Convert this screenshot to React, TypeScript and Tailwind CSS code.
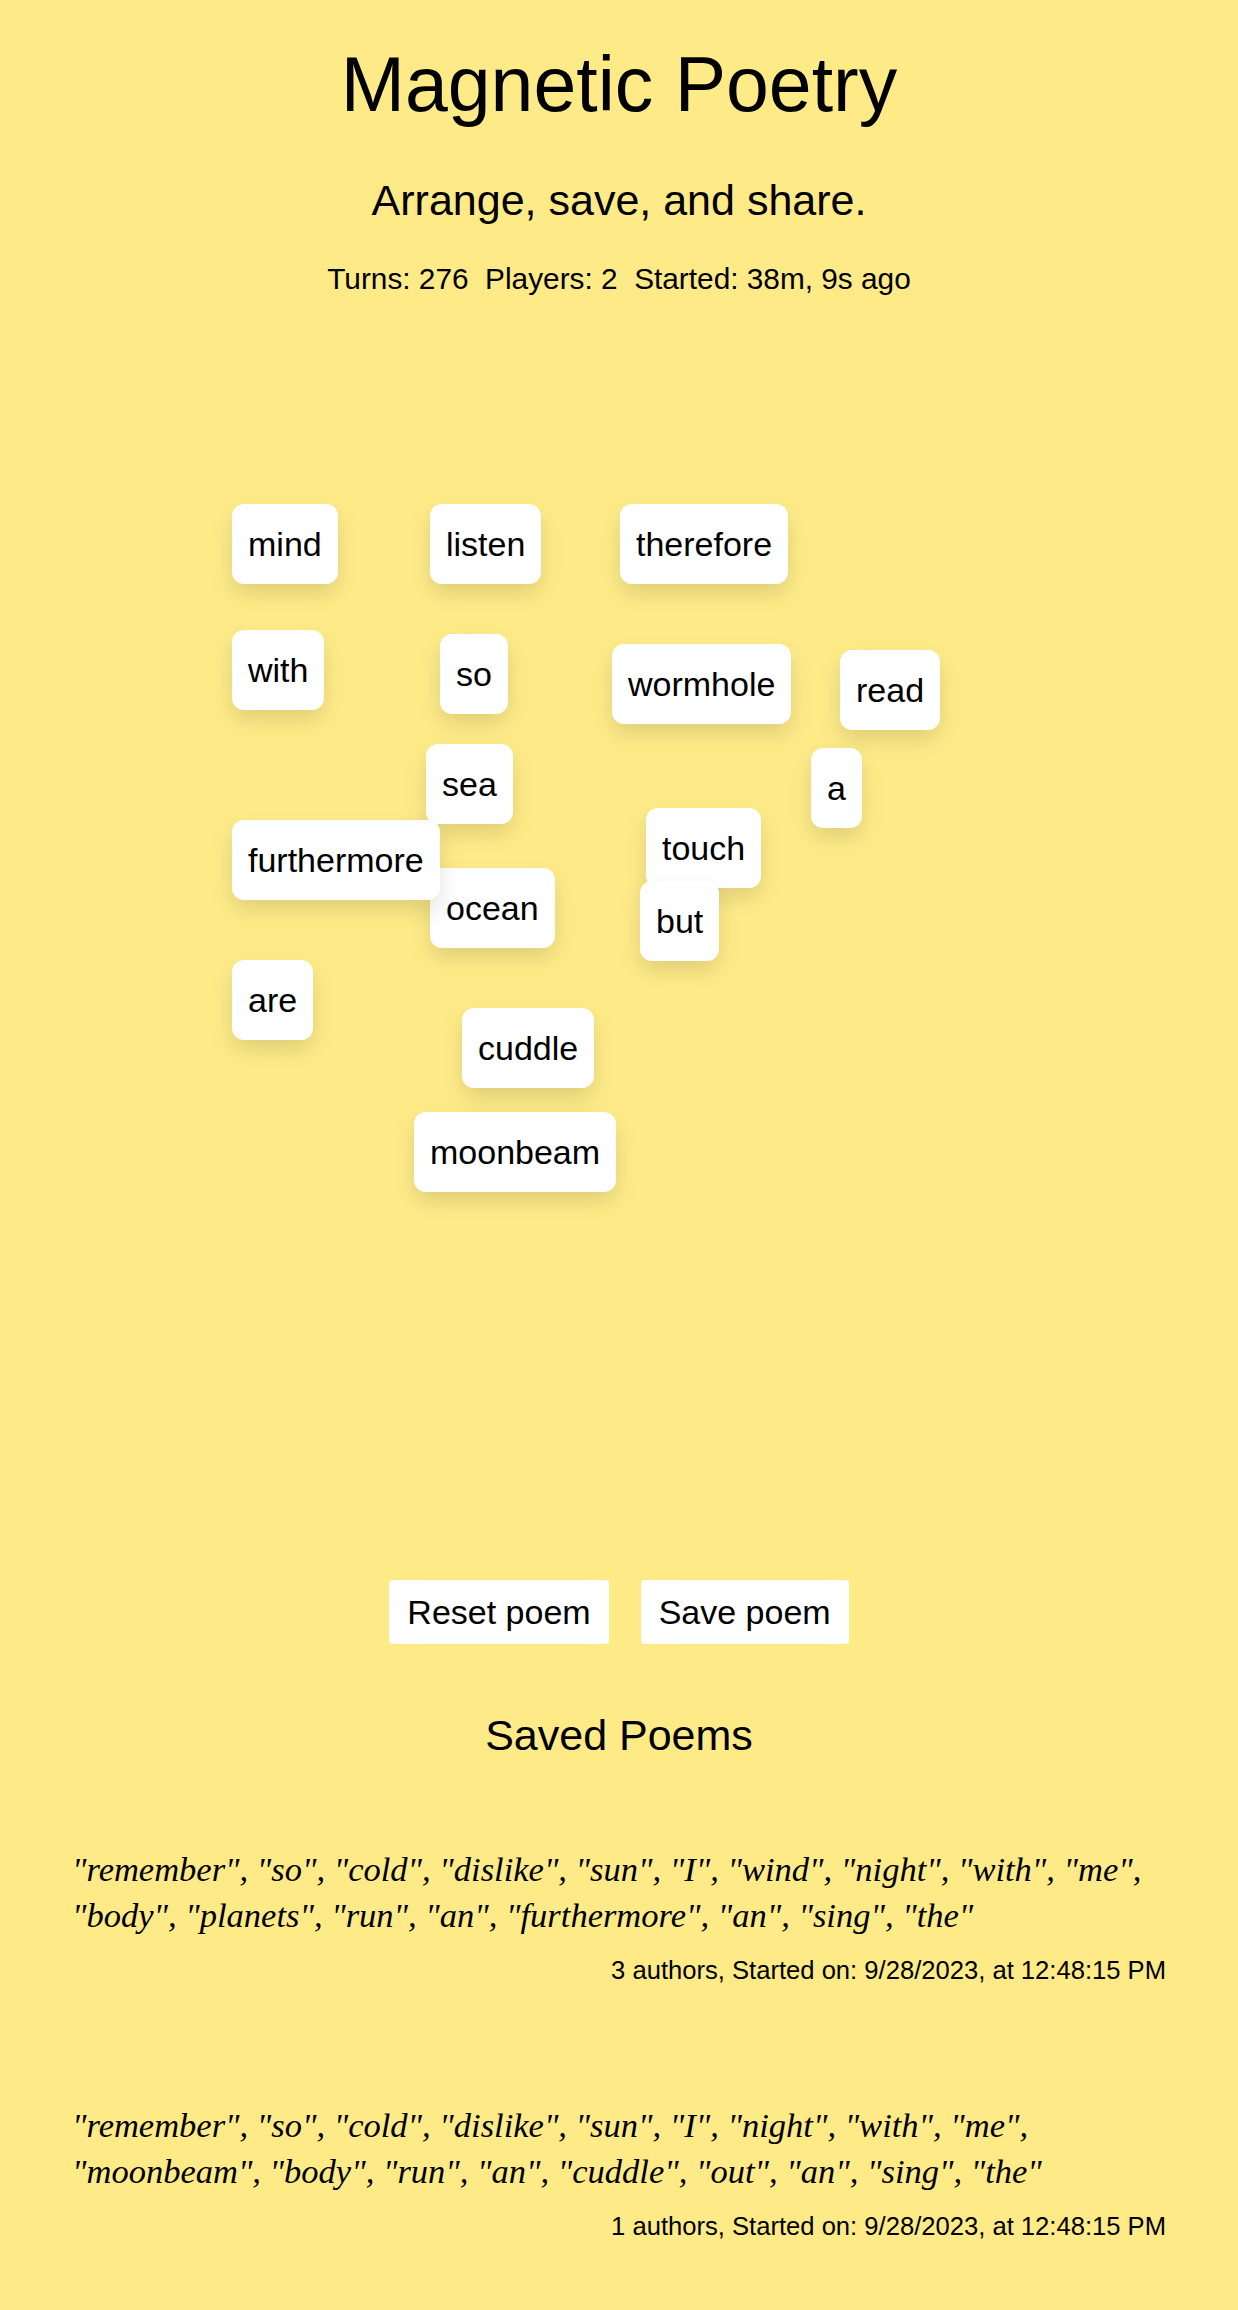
type Tile = { word: string; x: number; y: number }

// board origin is page (229, 296)
const tiles: Tile[] = [
  { word: 'mind', x: 232, y: 504 },
  { word: 'listen', x: 430, y: 504 },
  { word: 'therefore', x: 620, y: 504 },
  { word: 'with', x: 232, y: 630 },
  { word: 'so', x: 440, y: 634 },
  { word: 'wormhole', x: 612, y: 644 },
  { word: 'read', x: 840, y: 650 },
  { word: 'sea', x: 426, y: 744 },
  { word: 'a', x: 811, y: 748 },
  { word: 'ocean', x: 430, y: 868 },
  { word: 'furthermore', x: 232, y: 820 },
  { word: 'touch', x: 646, y: 808 },
  { word: 'but', x: 640, y: 881 },
  { word: 'are', x: 232, y: 960 },
  { word: 'cuddle', x: 462, y: 1008 },
  { word: 'moonbeam', x: 414, y: 1112 },
]

const poems = [
  {
    words: ['remember', 'so', 'cold', 'dislike', 'sun', 'I', 'wind', 'night', 'with', 'me', 'body', 'planets', 'run', 'an', 'furthermore', 'an', 'sing', 'the'],
    meta: '3 authors, Started on: 9/28/2023, at 12:48:15 PM',
  },
  {
    words: ['remember', 'so', 'cold', 'dislike', 'sun', 'I', 'night', 'with', 'me', 'moonbeam', 'body', 'run', 'an', 'cuddle', 'out', 'an', 'sing', 'the'],
    meta: '1 authors, Started on: 9/28/2023, at 12:48:15 PM',
  },
]

export default function App() {
  return (
    <div className="min-h-screen w-full bg-[#feeb88] text-black font-['Liberation_Sans',Arial,sans-serif]">
      <header className="flex flex-col items-center pt-[40px]">
        <h1 className="text-[77px] leading-[88px]">Magnetic Poetry</h1>
        <h2 className="mt-[47px] text-[43px] leading-[50px]">Arrange, save, and share.</h2>
        <p className="mt-[37px] text-[29.8px] leading-[34px] whitespace-pre">
          {'Turns: 276\u00a0 Players: 2\u00a0 Started: 38m, 9s ago'}
        </p>
      </header>

      <div className="relative mx-auto h-[1284px] w-[780px]">
        {tiles.map((t) => (
          <div
            key={t.word}
            className="absolute rounded-xl bg-white px-4 py-5 text-[34px] leading-[40px] whitespace-nowrap shadow-[0_10px_22px_rgba(0,0,0,0.12)]"
            style={{ left: t.x - 229, top: t.y - 296 }}
          >
            {t.word}
          </div>
        ))}
      </div>

      <div className="flex justify-center gap-8">
        <button className="rounded bg-white px-[18px] py-3 text-[34px] leading-[40px]">Reset poem</button>
        <button className="rounded bg-white px-[18px] py-3 text-[34px] leading-[40px]">Save poem</button>
      </div>

      <h3 className="mt-[66px] text-center text-[43px] leading-[50px]">Saved Poems</h3>

      <div className="mt-[86px] flex flex-col gap-[117px] px-[72px] pb-[68px]">
        {poems.map((p, i) => (
          <div key={i}>
            <p className="font-['Liberation_Serif','Times_New_Roman',serif] text-[34.5px] italic leading-[46px]">
              {p.words.map((w) => `"${w}"`).join(', ')}
            </p>
            <p className="mt-[17px] text-right text-[25.6px] leading-[30px]">{p.meta}</p>
          </div>
        ))}
      </div>
    </div>
  )
}
